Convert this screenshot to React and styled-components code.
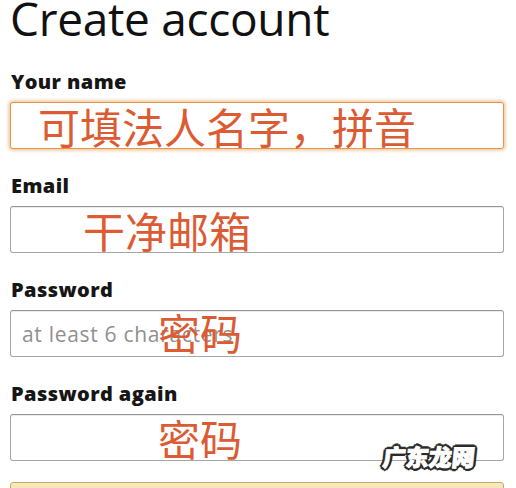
import React from 'react'
import styled, { createGlobalStyle } from 'styled-components'

const GlobalStyle = createGlobalStyle`
  html, body {
    margin: 0;
    padding: 0;
    background: #fff;
    overflow: hidden;
  }
  body {
    font-family: "Open Sans", "Noto Sans", Arial, sans-serif;
  }
`

const Page = styled.div`
  position: relative;
  width: 516px;
  height: 488px;
  overflow: hidden;
  box-sizing: border-box;
  padding: 0 12px 0 10px;
`

const Title = styled.h1`
  margin: -5px 0 31px;
  font-size: 46px;
  line-height: 46px;
  font-weight: 400;
  color: #111;
  letter-spacing: -0.3px;
`

const Fields = styled.div`
  display: flex;
  flex-direction: column;
  gap: 27px;
`

const Label = styled.label`
  display: block;
  margin-bottom: 10px;
  padding-left: 1px;
  font-size: 20px;
  line-height: 20px;
  font-weight: 800;
  letter-spacing: 0.4px;
  color: #161616;
`

const InputBox = styled.div`
  position: relative;
  display: flex;
  align-items: center;
  height: 47px;
  box-sizing: border-box;
  padding: 0 11px;
  border: 1px solid ${p => (p.focused ? '#e0954a' : '#a6a6a6')};
  border-top-color: ${p => (p.focused ? '#e0954a' : '#949494')};
  border-radius: 3px;
  background: #fff;
  box-shadow: ${p =>
    p.focused
      ? '0 0 3px 2px rgba(230, 150, 70, 0.45)'
      : '0 1px 0 rgba(255,255,255,.5), 0 1px 0 rgba(0,0,0,.07) inset'};
`

const Placeholder = styled.span`
  font-size: 21px;
  letter-spacing: 0.7px;
  color: #8f8f8f;
`

const Note = styled.span`
  position: absolute;
  left: ${p => p.left}px;
  top: 50%;
  transform: translateY(calc(-50% + ${p => p.shift || 0}px));
  font-family: "Noto Sans CJK SC", "Noto Sans", sans-serif;
  font-size: 42px;
  line-height: 1;
  color: #dc5b33;
  white-space: nowrap;
`

const Button = styled.div`
  margin-top: 21px;
  height: 31px;
  box-sizing: border-box;
  border: 1px solid #c9aa62;
  border-radius: 3px;
  background: linear-gradient(to bottom, #f8e9c0, #f1d48c);
  text-align: center;
  font-size: 14px;
  line-height: 29px;
  color: #111;
`

const Watermark = styled.div`
  position: absolute;
  left: 383px;
  top: 445px;
  font-family: "Noto Sans CJK SC", sans-serif;
  font-size: 23px;
  line-height: 1;
  font-weight: 900;
  color: #fff;
  -webkit-text-stroke: 1px #fff;
  text-shadow:
    2px 0 0 #2b2b2b, -2px 0 0 #2b2b2b, 0 2px 0 #2b2b2b, 0 -2px 0 #2b2b2b,
    2px 2px 0 #2b2b2b, -2px -2px 0 #2b2b2b, 2px -2px 0 #2b2b2b, -2px 2px 0 #2b2b2b,
    3px 0 0 #2b2b2b, -3px 0 0 #2b2b2b, 0 3px 0 #2b2b2b, 0 -3px 0 #2b2b2b;
  transform: skewX(-6deg);
`

const fields = [
  { label: 'Your name', note: '可填法人名字，拼音', left: 27, focused: true },
  { label: 'Email', note: '干净邮箱', left: 72 },
  { label: 'Password', note: '密码', left: 147, placeholder: 'at least 6 characters', shift: -2 },
  { label: 'Password again', note: '密码', left: 147 },
]

const App = () => {
  return (
    <Page>
      <GlobalStyle />
      <Title>Create account</Title>
      <Fields>
        {fields.map(f => (
          <div key={f.label}>
            <Label>{f.label}</Label>
            <InputBox focused={f.focused}>
              {f.placeholder && <Placeholder>{f.placeholder}</Placeholder>}
              <Note left={f.left} shift={f.shift}>{f.note}</Note>
            </InputBox>
          </div>
        ))}
      </Fields>
      <Button>Create your Amazon account</Button>
      <Watermark>广东龙网</Watermark>
    </Page>
  )
}

export default App
